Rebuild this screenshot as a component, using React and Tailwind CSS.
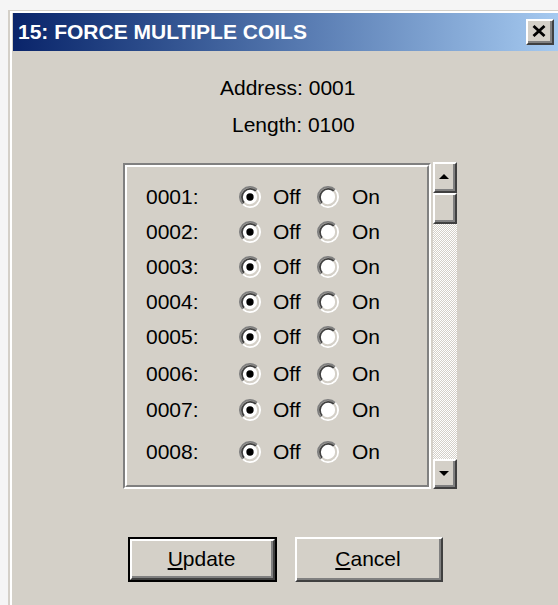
import React, { useState } from 'react';

const coilRows = [
  { addr: '0001', gap: 'mt-[18px]' },
  { addr: '0002', gap: 'mt-[11px]' },
  { addr: '0003', gap: 'mt-[11px]' },
  { addr: '0004', gap: 'mt-[11px]' },
  { addr: '0005', gap: 'mt-[11px]' },
  { addr: '0006', gap: 'mt-[13px]' },
  { addr: '0007', gap: 'mt-[12px]' },
  { addr: '0008', gap: 'mt-[18px]' },
];

// classic 3D bevel used by buttons and scrollbar parts
const Raised = ({ className = '', children }) => (
  <div
    className={`border-2 border-t-white border-l-white border-r-[#404040] border-b-[#404040] bg-[#d4d0c8] ${className}`}
  >
    <div className="flex h-full w-full items-center justify-center border-r-2 border-b-2 border-[#808080]">
      {children}
    </div>
  </div>
);

const Radio = ({ checked, onClick }) => (
  <button type="button" onClick={onClick} className="h-[22px] w-[22px] shrink-0">
    <svg viewBox="0 0 12 12" width="22" height="22">
      <circle cx="6" cy="6" r="4.5" fill="#fff" />
      <path d="M2.11 9.89A5.5 5.5 0 0 1 9.89 2.11" stroke="#808080" strokeWidth="1" fill="none" />
      <path d="M9.89 2.11A5.5 5.5 0 0 1 2.11 9.89" stroke="#fff" strokeWidth="1" fill="none" />
      <path d="M2.82 9.18A4.5 4.5 0 0 1 9.18 2.82" stroke="#404040" strokeWidth="1" fill="none" />
      <path d="M9.18 2.82A4.5 4.5 0 0 1 2.82 9.18" stroke="#d4d0c8" strokeWidth="1" fill="none" />
      {checked && <circle cx="6" cy="6" r="2" fill="#000" />}
    </svg>
  </button>
);

const CoilRow = ({ addr, gap, on, onChange }) => (
  <div className={`flex h-[24px] items-center pl-[19px] ${gap}`}>
    <span className="w-[93px]">{addr}:</span>
    <Radio checked={!on} onClick={() => onChange(false)} />
    <span className="ml-[12px] w-[44px]">Off</span>
    <Radio checked={on} onClick={() => onChange(true)} />
    <span className="ml-[13px]">On</span>
  </div>
);

export default function App() {
  const [coils, setCoils] = useState(coilRows.map(() => false));

  const setCoil = (i, value) => {
    setCoils((prev) => prev.map((c, idx) => (idx === i ? value : c)));
  };

  return (
    <div className="h-[605px] w-[558px] overflow-hidden bg-[#f5f5f5] pt-[10px] pl-[8px] font-['Liberation_Sans',Arial,sans-serif] text-[21px] leading-[24px] text-black">
      <div className="h-[620px] w-[552px] border-t border-l-2 border-[#d4d0c8]">
        <div className="h-full border-t-2 border-l-2 border-white bg-[#d4d0c8] pl-[1px] pr-[2px]">
          {/* title bar */}
          <div className="flex h-[38px] items-center justify-between bg-linear-to-r from-[#0a246a] to-[#a6caf0] pr-[4px] pl-[5px]">
            <span className="font-bold text-white">15: FORCE MULTIPLE COILS</span>
            <Raised className="h-[26px] w-[28px]">
              <svg width="14" height="12" viewBox="0 0 14 12">
                <path d="M1.5 1L12.5 11M12.5 1L1.5 11" stroke="#000" strokeWidth="2.8" />
              </svg>
            </Raised>
          </div>

          <div className="mt-[25px] pl-[207px]">Address: 0001</div>
          <div className="mt-[13px] pl-[219px]">Length: 0100</div>

          <div className="mt-[25px] ml-[110px] flex items-start gap-[2px]">
            {/* coil list */}
            <div className="mt-[1px] h-[326px] w-[308px] border-2 border-t-[#808080] border-l-[#808080] border-r-white border-b-white">
              <div className="h-full border-2 border-t-white border-l-white border-r-[#808080] border-b-[#808080]">
                {coilRows.map((row, i) => (
                  <CoilRow
                    key={row.addr}
                    addr={row.addr}
                    gap={row.gap}
                    on={coils[i]}
                    onChange={(v) => setCoil(i, v)}
                  />
                ))}
              </div>
            </div>

            {/* scrollbar */}
            <div className="flex h-[327px] w-[24px] flex-col">
              <Raised className="h-[31px] w-full">
                <svg width="10" height="5" viewBox="0 0 10 5">
                  <path d="M5 0L10 5H0Z" fill="#000" />
                </svg>
              </Raised>
              <Raised className="h-[31px] w-full" />
              <div className="flex-1 bg-[repeating-conic-gradient(#ffffff_0_25%,#d4d0c8_0_50%)] bg-[length:2px_2px]" />
              <Raised className="h-[30px] w-full">
                <svg width="10" height="5" viewBox="0 0 10 5">
                  <path d="M0 0H10L5 5Z" fill="#000" />
                </svg>
              </Raised>
            </div>
          </div>

          <div className="mt-[48px] ml-[115px] flex gap-[18px]">
            <div className="h-[45px] w-[149px] border-2 border-black">
              <Raised className="h-full w-full">
                <span>
                  <span className="underline underline-offset-2">U</span>pdate
                </span>
              </Raised>
            </div>
            <Raised className="h-[45px] w-[148px]">
              <span>
                <span className="underline underline-offset-2">C</span>ancel
              </span>
            </Raised>
          </div>
        </div>
      </div>
    </div>
  );
}
